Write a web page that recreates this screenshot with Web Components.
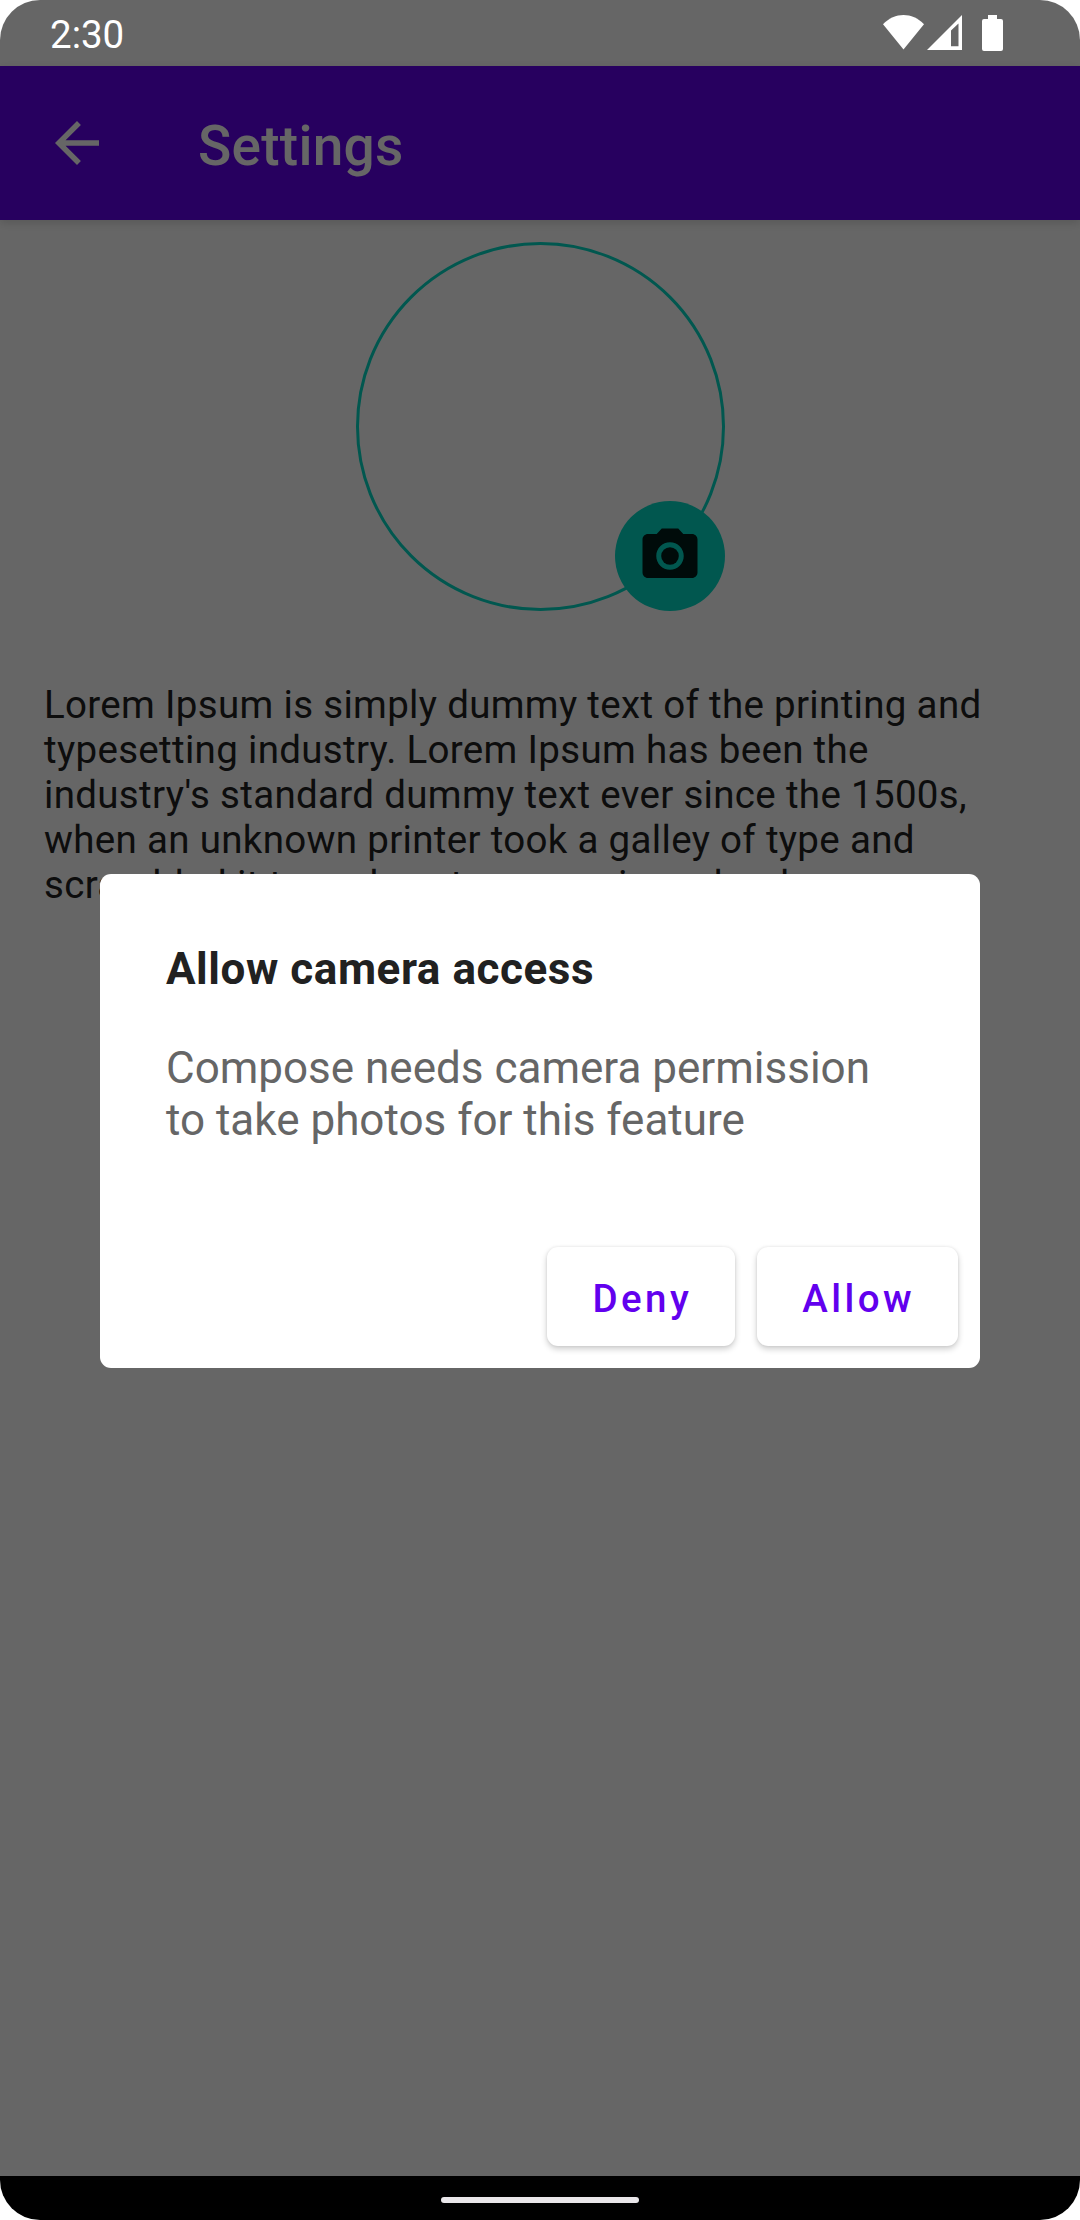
<!DOCTYPE html>
<html lang="en">
<head>
<meta charset="utf-8">
<title>Settings</title>
<style>
  html, body { margin: 0; background: #fff; }
  body { width: 1080px; height: 2220px; overflow: hidden; font-family: Roboto, sans-serif; }
</style>
</head>
<body>
<phone-frame>
  <status-bar slot="status">2:30</status-bar>
  <app-bar slot="screen">Settings</app-bar>
  <profile-picture slot="screen"></profile-picture>
  <body-text slot="screen">Lorem Ipsum is simply dummy text of the printing and typesetting industry. Lorem Ipsum has been the industry's standard dummy text ever since the 1500s, when an unknown printer took a galley of type and scrambled it to make a type specimen book.</body-text>
  <alert-dialog slot="dialog">
    <span slot="title">Allow camera access</span>
    <span slot="text">Compose needs camera permission to take photos for this feature</span>
    <raised-button slot="actions">Deny</raised-button>
    <raised-button slot="actions">Allow</raised-button>
  </alert-dialog>
  <navigation-bar slot="nav"></navigation-bar>
</phone-frame>
<script>
  const define = (name, html) => customElements.define(name, class extends HTMLElement {
    constructor() {
      super();
      this.attachShadow({ mode: 'open' }).innerHTML = html;
    }
  });

  define('phone-frame', `
    <style>
      :host { display: grid; grid-template: 66px 2110px 44px / 1080px; overflow: hidden; border-radius: 40px; background: #fff; }
      .status { grid-area: 1 / 1; z-index: 2; }
      .screen { grid-area: 2 / 1; display: flex; flex-direction: column; min-height: 0; }
      .scrim { grid-area: 1 / 1 / 3 / 2; background: rgba(0, 0, 0, .6); z-index: 1; }
      .dialog { grid-area: 2 / 1; display: flex; align-items: center; justify-content: center; z-index: 2; }
      .nav { grid-area: 3 / 1; display: grid; z-index: 2; }
    </style>
    <div class="screen"><slot name="screen"></slot></div>
    <div class="scrim"></div>
    <div class="status"><slot name="status"></slot></div>
    <div class="dialog"><slot name="dialog"></slot></div>
    <div class="nav"><slot name="nav"></slot></div>`);

  define('status-bar', `
    <style>
      :host { display: flex; height: 66px; box-sizing: border-box; padding: 0 77px 0 50px; justify-content: space-between; color: #fff; font-size: 38.5px; line-height: 69px; }
      svg { display: block; width: 120px; height: 66px; }
    </style>
    <slot></slot>
    <svg viewBox="883 0 120 66" fill="#fff">
      <path d="M903.5 49.5 L883 24.2 C895 12 912 12 924 24.2 Z"/>
      <path fill-rule="evenodd" d="M927 50 L962 15 V50 Z M951 30.5 V46.3 H958.5 V23.5 Z"/>
      <path d="M988 15 h9 v4 h4 a2 2 0 0 1 2 2 v28 a2 2 0 0 1 -2 2 h-17 a2 2 0 0 1 -2 -2 v-28 a2 2 0 0 1 2 -2 h4 Z"/>
    </svg>`);

  define('app-bar', `
    <style>
      :host { display: flex; flex: none; align-items: center; gap: 88px; height: 154px; box-sizing: border-box; padding-left: 44px; background: #6200ee; color: #fff; font-size: 55px; font-weight: 500; letter-spacing: .25px; box-shadow: 0 3px 9px rgba(0, 0, 0, .15); }
      svg { width: 66px; height: 66px; flex: none; }
      .title { line-height: 64px; padding-top: 5px; }
    </style>
    <svg viewBox="0 0 24 24" fill="#fff"><path d="M20 11H7.83l5.59-5.59L12 4l-8 8 8 8 1.41-1.41L7.83 13H20v-2z"/></svg>
    <div class="title"><slot></slot></div>`);

  define('profile-picture', `
    <style>
      :host { display: flex; flex: none; align-items: flex-end; justify-content: flex-end; width: 369px; height: 369px; margin: 22px 0 0 356px; position: relative; }
      .ring { position: absolute; inset: 0; box-sizing: border-box; border: 3px solid #03dac5; border-radius: 50%; }
      .badge { position: relative; display: flex; align-items: center; justify-content: center; width: 110px; height: 110px; border-radius: 50%; background: #03dac5; }
      svg { width: 66px; height: 66px; }
    </style>
    <div class="ring"></div>
    <div class="badge">
      <svg viewBox="0 0 24 24" fill="#001c1a"><circle cx="12" cy="12" r="3.2"/><path d="M9 2L7.17 4H4c-1.1 0-2 .9-2 2v12c0 1.1.9 2 2 2h16c1.1 0 2-.9 2-2V6c0-1.1-.9-2-2-2h-3.17L15 2H9zm3 15c-2.76 0-5-2.24-5-5s2.24-5 5-5 5 2.24 5 5-2.24 5-5 5z"/></svg>
    </div>`);

  define('body-text', `
    <style>
      :host { display: block; margin: 71px 44px 0; color: #212121; font-size: 38.5px; line-height: 45px; letter-spacing: .32px; }
    </style>
    <slot></slot>`);

  define('alert-dialog', `
    <style>
      :host { display: flex; flex-direction: column; box-sizing: border-box; width: 880px; height: 494px; border-radius: 11px; background: #fff; padding: 69px 22px 22px 66px; font-size: 44px; line-height: 52px; }
      .title { color: #212121; font-weight: 700; letter-spacing: .56px; }
      .text { margin: 47px 44px 0 0; color: #666; letter-spacing: 0; }
      .actions { display: flex; justify-content: flex-end; gap: 22px; margin-top: auto; }
    </style>
    <div class="title"><slot name="title"></slot></div>
    <div class="text"><slot name="text"></slot></div>
    <div class="actions"><slot name="actions"></slot></div>`);

  define('raised-button', `
    <style>
      :host { display: flex; align-items: center; box-sizing: border-box; height: 99px; padding: 3px 43px 0 45px; border-radius: 11px; background: #fff; color: #6200ee; font-size: 38.5px; line-height: 45px; font-weight: 500; letter-spacing: 3.4375px; box-shadow: 0 3px 6px rgba(0, 0, 0, .2), 0 0 3px rgba(0, 0, 0, .08); }
    </style>
    <slot></slot>`);

  define('navigation-bar', `
    <style>
      :host { display: flex; justify-content: center; align-items: center; background: #000; padding-top: 4px; box-sizing: border-box; }
      .pill { width: 198px; height: 6px; border-radius: 3px; background: #e9e7ea; }
    </style>
    <div class="pill"></div>`);
</script>
</body>
</html>
